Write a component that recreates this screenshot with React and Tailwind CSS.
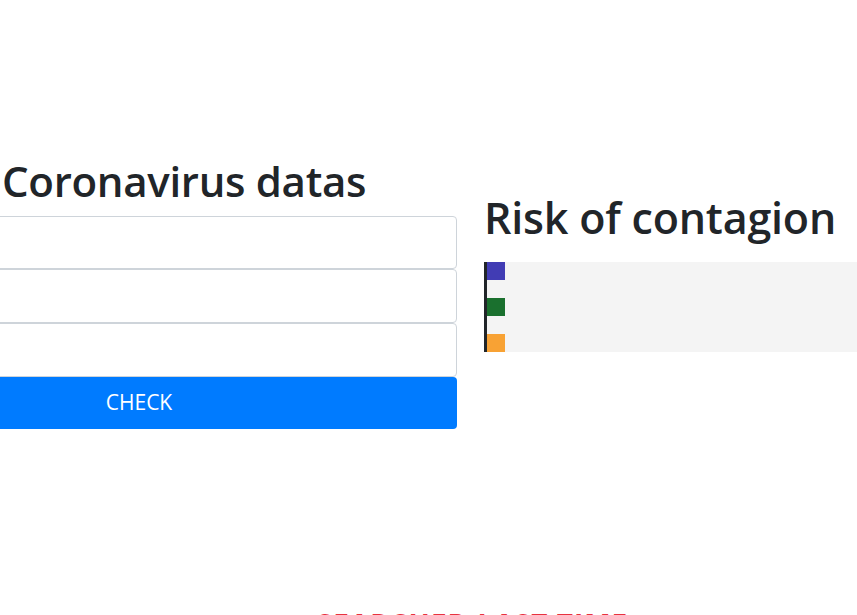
export default function App() {
  const bars = [
    { color: "bg-[#413cb4]", w: "w-[18px]" },
    { color: "bg-[#1a702e]", w: "w-[18px]" },
    { color: "bg-[#f8a234]", w: "w-[18px]" },
  ];

  return (
    <div className="w-[857px] h-[615px] overflow-hidden bg-white text-[#212529] font-['Open_Sans',sans-serif]">
      <div className="flex pt-[157px]">
        {/* Left: form */}
        <div className="ml-[-179px] w-[636px] shrink-0">
          <h1 className="pl-[181px] text-[42px] leading-[48px] font-semibold tracking-[-0.3px] mb-[11px]">Coronavirus datas</h1>
          <form className="flex flex-col">
            <input className="h-[53px] border border-[#ced4da] rounded-[4px] px-3 bg-white" />
            <input className="h-[54px] border border-[#ced4da] rounded-[4px] px-3 bg-white" />
            <input className="h-[54px] border border-[#ced4da] rounded-[4px] px-3 bg-white" />
            <button
              type="button"
              className="h-[52px] bg-[#007bff] text-white text-[21px] rounded-[4px]"
            >
              CHECK
            </button>
          </form>
        </div>

        {/* Right: chart */}
        <div className="ml-[27px] flex-1 pt-[37px]">
          <h2 className="text-[43px] leading-[48px] font-semibold tracking-[-0.2px] mb-[20px]">Risk of contagion</h2>
          <div className="flex flex-col gap-[18px] h-[90px] bg-[#f4f4f4] border-l-[3px] border-[#212529]">
            {bars.map((b, i) => (
              <div key={i} className={`${b.color} ${b.w} h-[18px]`} />
            ))}
          </div>
        </div>
      </div>

      <div className="mt-[179px] pl-[88px] text-center text-[#e8323f] text-[28px] leading-[32px] font-bold tracking-[1px]">
        SEARCHED LAST TIME
      </div>
    </div>
  );
}
